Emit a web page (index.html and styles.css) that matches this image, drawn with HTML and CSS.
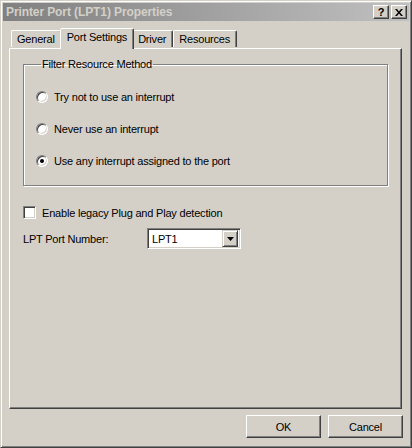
FILE: index.html
```html
<!DOCTYPE html>
<html lang="en">
<head>
  <meta charset="UTF-8">
  <title>Printer Port (LPT1) Properties</title>
  <link rel="stylesheet" href="styles.css">
</head>
<body>

<div class="window">
  <div class="titlebar">
    <div class="title">Printer Port (LPT1) Properties</div>
    <div class="title-buttons">
      <div class="tbtn">?</div>
      <div class="tbtn">
        <svg width="8" height="7" viewBox="0 0 8 7"><path d="M0 0h2l2 2.5L6 0h2L5 3.5 8 7H6L4 4.5 2 7H0l3-3.5z" fill="#000"/></svg>
      </div>
    </div>
  </div>

  <div class="body">
    <div class="tabs">
      <div class="tab first">General</div>
      <div class="tab active">Port Settings</div>
      <div class="tab">Driver</div>
      <div class="tab">Resources</div>
    </div>

    <div class="panel">
      <fieldset class="group">
        <legend>Filter Resource Method</legend>
        <label class="radio-row"><span class="radio"></span>Try not to use an interrupt</label>
        <label class="radio-row"><span class="radio"></span>Never use an interrupt</label>
        <label class="radio-row"><span class="radio checked"></span>Use any interrupt assigned to the port</label>
      </fieldset>

      <label class="check-row"><span class="checkbox"></span>Enable legacy Plug and Play detection</label>

      <div class="port-row">
        <span class="port-label">LPT Port Number:</span>
        <div class="combo">
          <span class="combo-text">LPT1</span>
          <span class="combo-btn">
            <svg width="7" height="4" viewBox="0 0 7 4"><path d="M0 0h7L3.5 4z" fill="#000"/></svg>
          </span>
        </div>
      </div>
    </div>

    <div class="buttons">
      <div class="btn">OK</div>
      <div class="btn">Cancel</div>
    </div>
  </div>
</div>

</body>
</html>
```

FILE: styles.css
```css
body {
  margin: 0;
  font-family: "Liberation Sans", Arial, sans-serif;
  font-size: 11px;
  letter-spacing: -0.2px;
  color: #000;
  background-color: #d4d0c8;
}

.window {
  width: 412px;
  height: 448px;
  box-sizing: border-box;
  background-color: #d4d0c8;
  border: 1px solid;
  border-color: #d4d0c8 #404040 #404040 #d4d0c8;
  box-shadow: inset 1px 1px 0 #fff, inset -1px -1px 0 #808080;
  padding: 2px;
  display: flex;
  flex-direction: column;
}

.titlebar {
  height: 18px;
  background: linear-gradient(to right, #808080, #c0c0c0);
  display: flex;
  align-items: center;
  justify-content: space-between;
  padding: 0 2px 0 3px;
}

.title {
  color: #d4d0c8;
  font-weight: bold;
  font-size: 12px;
  letter-spacing: -0.1px;
}

.title-buttons {
  display: flex;
  gap: 2px;
}

.tbtn {
  width: 16px;
  height: 14px;
  box-sizing: border-box;
  background-color: #d4d0c8;
  border: 1px solid;
  border-color: #fff #404040 #404040 #fff;
  box-shadow: inset -1px -1px 0 #808080;
  display: flex;
  align-items: center;
  justify-content: center;
  font-weight: bold;
  font-size: 11px;
  line-height: 1;
}

.body {
  flex: 1;
  display: flex;
  flex-direction: column;
  padding: 7px 7px 7px 6px;
}

.tabs {
  display: flex;
  align-items: flex-end;
  height: 20px;
  padding-left: 2px;
  position: relative;
  z-index: 1;
}

.tab {
  height: 17px;
  box-sizing: border-box;
  padding: 2px 6px 0 5px;
  border: 1px solid;
  border-bottom: none;
  border-color: #fff #404040 transparent #fff;
  box-shadow: inset -1px 0 0 #808080;
  border-radius: 2px 2px 0 0;
  margin-bottom: 1px;
}

.tab.active {
  height: 21px;
  padding: 2px 6px 0 6px;
  margin: 0 -2px -1px -2px;
  background-color: #d4d0c8;
  position: relative;
  z-index: 2;
}

.panel {
  flex: 1;
  border: 1px solid;
  border-color: #fff #404040 #404040 #fff;
  box-shadow: inset -1px -1px 0 #808080;
  padding: 9px 13px 0 13px;
  display: flex;
  flex-direction: column;
}

.group {
  margin: 0;
  height: 128px;
  box-sizing: border-box;
  border: 1px solid #808080;
  box-shadow: 1px 1px 0 #fff, inset 1px 1px 0 #fff;
  padding: 20px 0 0 12px;
  display: flex;
  flex-direction: column;
  gap: 19px;
}

.group legend {
  padding: 0 1px;
  margin-left: 5px;
}

.radio-row, .check-row {
  display: flex;
  align-items: center;
  gap: 6px;
  height: 13px;
}

.radio {
  width: 12px;
  height: 12px;
  box-sizing: border-box;
  border-radius: 50%;
  border: 1px solid;
  border-color: #808080 #fff #fff #808080;
  background-color: #fff;
  box-shadow: inset 1px 1px 0 #404040, inset -1px -1px 0 #d4d0c8;
  display: flex;
  align-items: center;
  justify-content: center;
}

.radio.checked::after {
  content: "";
  width: 4px;
  height: 4px;
  border-radius: 50%;
  background-color: #000;
}

.check-row {
  margin-top: 20px;
}

.checkbox {
  width: 13px;
  height: 13px;
  box-sizing: border-box;
  border: 1px solid;
  border-color: #808080 #fff #fff #808080;
  background-color: #fff;
  box-shadow: inset 1px 1px 0 #404040, inset -1px -1px 0 #d4d0c8;
}

.port-row {
  display: flex;
  align-items: center;
  margin-top: 9px;
}

.port-label {
  width: 124px;
}

.combo {
  width: 94px;
  height: 21px;
  box-sizing: border-box;
  border: 1px solid;
  border-color: #808080 #fff #fff #808080;
  box-shadow: inset 1px 1px 0 #404040, inset -1px -1px 0 #d4d0c8;
  background-color: #fff;
  display: flex;
  align-items: center;
  justify-content: space-between;
  padding: 2px;
}

.combo-text {
  padding-left: 2px;
}

.combo-btn {
  width: 16px;
  height: 17px;
  box-sizing: border-box;
  background-color: #d4d0c8;
  border: 1px solid;
  border-color: #d4d0c8 #404040 #404040 #d4d0c8;
  box-shadow: inset 1px 1px 0 #fff, inset -1px -1px 0 #808080;
  display: flex;
  align-items: center;
  justify-content: center;
}

.buttons {
  display: flex;
  justify-content: flex-end;
  gap: 7px;
  margin-top: 6px;
  margin-right: -1px;
}

.btn {
  width: 75px;
  height: 23px;
  box-sizing: border-box;
  border: 1px solid;
  border-color: #fff #404040 #404040 #fff;
  box-shadow: inset -1px -1px 0 #808080;
  display: flex;
  align-items: center;
  justify-content: center;
}
```
